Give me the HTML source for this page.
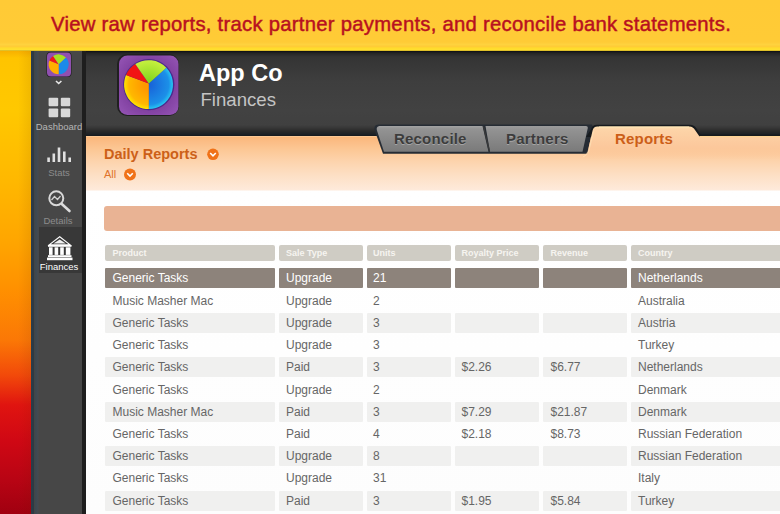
<!DOCTYPE html>
<html><head><meta charset="utf-8">
<style>
*{margin:0;padding:0;box-sizing:border-box}
html,body{width:780px;height:514px;overflow:hidden;background:#fff;font-family:"Liberation Sans",sans-serif}
.a{position:absolute}
#strip{left:0;top:0;width:33px;height:514px;background:linear-gradient(90deg,rgba(0,0,0,0) 55%,rgba(90,30,0,0.10) 100%),linear-gradient(180deg,#f8b000 51px,#ffc400 58px,#ffc800 110px,#ffb800 180px,#ffa600 240px,#ff9000 290px,#fb7806 340px,#f24a0a 375px,#e01410 405px,#d00814 440px,#b80414 480px,#a00010 514px)}
#banner{left:0;top:0;width:780px;height:51px;background:linear-gradient(180deg,#ffca36 0,#ffcb36 42px,#ffd23e 44.5px,#ffcc36 46.5px,#ffda2c 48px,#ffe030 50px,#c0a020 51px);}
#banner span{position:absolute;left:51px;top:13px;font-size:20.3px;letter-spacing:0.26px;color:#b81020;white-space:nowrap;-webkit-text-stroke:0.45px #b81020}
#sidebar{left:32px;top:51px;width:50px;height:463px;background:#474747}
#sideline{left:31px;top:51px;width:8px;height:463px;background:linear-gradient(90deg,#2a3c4a 0,#2e3a44 2.5px,#48443f 3px,#3c4852 4.5px,#444a50 7px,#474747 8px)}
#sideborder{left:82px;top:51px;width:4px;height:463px;background:#1e1e1e}
#header{left:86px;top:51px;width:694px;height:85px;background:linear-gradient(180deg,#0c0e12 0px,#242424 2px,#343434 6px,#3e3e3e 30px,#424242 60px,#404040 74px,#363636 77px,#2a2a2a 80px,#1e2226 83px,#161a1e 85px)}
#content{left:86px;top:136px;width:694px;height:378px;background:linear-gradient(180deg,#fdd0a0 0px,#fbb87c 1.5px,#fbbc84 5px,#fcc896 14px,#fdd4ae 26px,#fde0c6 40px,#feeadb 54px,#ffffff 55px,#fdfdfd 378px)}
.navlbl{position:absolute;font-size:9.5px;color:#8c8c8c;text-align:center;width:50px;left:0;white-space:nowrap}
.hc{background:#cfccc4;border-radius:2px;font-size:9px;font-weight:bold;line-height:16px;color:#f6f4f0;white-space:nowrap;overflow:hidden}
.rd,.rs,.rw{height:20px;line-height:20px;font-size:12px;white-space:nowrap;overflow:hidden;border-radius:1px}
.rd{background:#8d837b;color:#fff}
.rs{background:#f0f0ef;color:#666}
.rw{background:transparent;color:#666}
.tab{position:absolute;font-size:15px;font-weight:bold;white-space:nowrap;letter-spacing:0.2px}
</style></head><body>
<div class="a" id="strip"></div>
<div class="a" id="sidebar">
  <div class="a" style="left:0;top:176px;width:50px;height:46px;background:#383838"></div>
</div>
<div class="a" id="sideline"></div>
<div class="a" id="sideborder"></div>
<svg class="a" style="left:0;top:0" width="90" height="300" viewBox="0 0 90 300">
  <!-- small app icon -->
  <rect x="46.5" y="52" width="25" height="25" rx="4" fill="#1c1c1c"/>
  <rect x="47" y="52.5" width="24" height="24" rx="4" fill="#9050b0"/>
  <g transform="translate(58.7,64.3) scale(0.41)">
    <path d="M0,0 L17.5,-16.8 A24.5,24.5 0 0 1 0,24.5 Z" fill="#1a8ae8"/>
    <path d="M0,0 L0,24.5 A24.5,24.5 0 0 1 -22.8,-9 Z" fill="#ffb000"/>
    <path d="M0,0 L-22.8,-9 A24.5,24.5 0 0 1 -13.7,-20.3 Z" fill="#f01818"/>
    <path d="M0,0 L-13.7,-20.3 A24.5,24.5 0 0 1 17.5,-16.8 Z" fill="#a8e020"/>
  </g>
  <path d="M56,81 L58.7,83.5 L61.4,81" stroke="#e8e8e8" stroke-width="1.6" fill="none"/>
  <!-- dashboard grid -->
  <rect x="48.6" y="97.8" width="9.6" height="8.5" rx="1" fill="#d8d8d8"/>
  <rect x="60.8" y="97.8" width="9.4" height="8.5" rx="1" fill="#d8d8d8"/>
  <rect x="48.6" y="108.6" width="9.6" height="8.7" rx="1" fill="#d8d8d8"/>
  <rect x="60.8" y="108.6" width="9.4" height="8.7" rx="1" fill="#d8d8d8"/>
  <!-- stats bars -->
  <g fill="#e0e0e0">
    <rect x="47.3" y="157.5" width="2.6" height="4.5"/>
    <rect x="52.5" y="153.5" width="2.6" height="8.5"/>
    <rect x="57.7" y="147.5" width="2.6" height="14.5"/>
    <rect x="63" y="151.5" width="2.6" height="10.5"/>
    <rect x="68.4" y="157.5" width="2.6" height="4.5"/>
  </g>
  <!-- details magnifier -->
  <circle cx="56.3" cy="198.3" r="7" stroke="#d8d8d8" stroke-width="2" fill="none"/>
  <path d="M51.5,200 L54.5,196.5 L57.5,199.5 L60.5,196" stroke="#d0d0d0" stroke-width="1.3" fill="none"/>
  <path d="M61.8,204 L69.5,211" stroke="#dcdcdc" stroke-width="2.6" stroke-linecap="round"/>
  <!-- finances bank -->
  <path d="M47.5,245.5 L59.7,236 L71.8,245.5 Z" fill="#ffffff"/>
  <path d="M50.8,244.2 L59.7,237.6 L68.5,244.2 Z" fill="#383838"/>
  <path d="M53.5,243.6 L59.7,239.6 L65.8,243.6 Z" fill="#f0f0f0"/>
  <rect x="48" y="245" width="23.5" height="1.8" fill="#fff"/>
  <g fill="#fff">
    <rect x="49" y="247.3" width="3.6" height="7.6"/>
    <rect x="54.6" y="247.3" width="3.6" height="7.6"/>
    <rect x="60.2" y="247.3" width="3.6" height="7.6"/>
    <rect x="65.8" y="247.3" width="4.6" height="7.6"/>
    <rect x="48" y="255.2" width="23.5" height="2"/>
    <rect x="47" y="257.6" width="25.5" height="2.6"/>
  </g>
</svg>
<div class="navlbl" style="left:34px;top:121px;color:#b4b4b4">Dashboard</div>
<div class="navlbl" style="left:34px;top:167px">Stats</div>
<div class="navlbl" style="left:33px;top:215px">Details</div>
<div class="navlbl" style="left:34px;top:261px;color:#fff">Finances</div>

<div class="a" id="header"></div>
<svg class="a" style="left:100px;top:50px" width="100" height="75" viewBox="100 50 100 75">
  <defs>
    <radialGradient id="pur" cx="0.5" cy="0.5" r="0.7"><stop offset="0.5" stop-color="#7c3c9c"/><stop offset="1" stop-color="#9656b6"/></radialGradient>
    <radialGradient id="blu" cx="0" cy="0" r="25" gradientUnits="userSpaceOnUse"><stop offset="0" stop-color="#1860d8"/><stop offset="0.8" stop-color="#1c90e8"/><stop offset="1" stop-color="#28d0f4"/></radialGradient>
    <radialGradient id="yel" cx="0" cy="0" r="25" gradientUnits="userSpaceOnUse"><stop offset="0.2" stop-color="#ff9800"/><stop offset="0.8" stop-color="#ffb800"/><stop offset="1" stop-color="#ffe800"/></radialGradient>
    <radialGradient id="grn" cx="0" cy="0" r="25" gradientUnits="userSpaceOnUse"><stop offset="0.2" stop-color="#88d820"/><stop offset="1" stop-color="#c8f040"/></radialGradient>
  </defs>
  <rect x="117" y="54" width="62" height="62" rx="10" fill="#202020"/>
  <rect x="119" y="55.6" width="59.5" height="59.5" rx="8.5" fill="url(#pur)"/>
  <g transform="translate(148.8,84.6)">
    <circle r="25.6" fill="#4a2a8c"/>
    <path d="M0,-1 L17.5,-16.8 A24.5,24.5 0 0 1 0,24.5 Z" fill="url(#blu)"/>
    <path d="M0,-1 L0,24.5 A24.5,24.5 0 0 1 -22.8,-9.5 Z" fill="url(#yel)"/>
    <path d="M0,-1 L-22.8,-9.5 A24.5,24.5 0 0 1 -13.5,-20.5 Z" fill="#f21414"/>
    <path d="M0,-1 L-13.5,-20.5 A24.5,24.5 0 0 1 17.5,-16.8 Z" fill="url(#grn)"/>
  </g>
</svg>
<div class="a" style="left:199px;top:59.5px;font-size:23.5px;font-weight:bold;color:#fff;white-space:nowrap">App Co</div>
<div class="a" style="left:200.5px;top:89px;font-size:18.6px;color:#c4c4c4;white-space:nowrap">Finances</div>

<div class="a" id="content"></div>
<svg class="a" style="left:360px;top:120px" width="420" height="45" viewBox="360 120 420 45">
  <defs>
    <linearGradient id="tabg" x1="0" y1="0" x2="0" y2="1"><stop offset="0" stop-color="#9c9c9c"/><stop offset="0.15" stop-color="#929292"/><stop offset="1" stop-color="#7a7a7a"/></linearGradient>
    <linearGradient id="taba" x1="0" y1="126" x2="0" y2="160" gradientUnits="userSpaceOnUse"><stop offset="0" stop-color="#fee0b0"/><stop offset="0.1" stop-color="#fdd4a8"/><stop offset="0.6" stop-color="#fcc89c"/><stop offset="1" stop-color="#fcc89c" stop-opacity="0"/></linearGradient>
  </defs>
  <!-- inactive tabs outline -->
  <path d="M374.5,130 Q373.5,124.5 379,124.5 L592,124.5 L593,127 L587.5,153.8 L383,153.8 Z" fill="#262c34"/>
  <path d="M376.8,130 Q376,126 380.5,126 L482.5,126 L488.5,151.8 L384,151.8 Z" fill="url(#tabg)"/>
  <path d="M379,126.8 L481.5,126.8" stroke="#a4a4a4" stroke-width="1"/>
  <path d="M487,126.8 L584,126.8" stroke="#a4a4a4" stroke-width="1"/>
  <path d="M485.5,126 L586,126 Q588,126 587.8,128 L582.5,151.8 L490,151.8 Z" fill="url(#tabg)"/>
  <path d="M483.5,126.5 L489.5,151.5" stroke="#3a3a3a" stroke-width="1.2"/>
  <!-- reports active -->
  <path d="M591,129.5 Q592,124.8 597,124.8 L690,124.8 Q694,124.8 696.5,128.5 L700.5,134.5 L780,134.5 L780,137 L586,137 Z" fill="#161a1e"/>
  <path d="M580,157 Q586.8,155 588,150 L592.6,130.5 Q593.5,126.5 597.5,126.5 L689.5,126.5 Q693,126.5 695,130 L699.5,136.5 L780,136.5 L780,160 L580,160 Z" fill="url(#taba)"/>
  <path d="M599,127 L689,127" stroke="#ffe8b8" stroke-width="1"/>
  <path d="M593.6,131 L588.8,151 Q587.5,155 583,157" stroke="#ffe4b8" stroke-width="0.9" fill="none" opacity="0.8"/>
  <path d="M699.5,136.6 L780,136.6" stroke="#fed494" stroke-width="1.2"/>
</svg>
<div class="tab" style="left:394px;top:130px;color:#3c3c3c;text-shadow:0 1px 0 rgba(255,255,255,0.3)">Reconcile</div>
<div class="tab" style="left:506px;top:130px;color:#3c3c3c;text-shadow:0 1px 0 rgba(255,255,255,0.3)">Partners</div>
<div class="tab" style="left:615px;top:130px;color:#cc5e18">Reports</div>
<div class="a" style="left:104px;top:146px;font-size:14.5px;font-weight:bold;color:#cc6018;white-space:nowrap">Daily Reports</div>
<svg class="a" style="left:200px;top:145px" width="20" height="40" viewBox="200 145 20 40">
  <circle cx="213" cy="154.3" r="5.8" fill="#f07218"/>
  <path d="M210.2,153 L213,155.8 L215.8,153" stroke="#fff" stroke-width="1.6" fill="none"/>
</svg>
<div class="a" style="left:104px;top:168px;font-size:11px;color:#e0742c;white-space:nowrap">All</div>
<svg class="a" style="left:120px;top:165px" width="20" height="20" viewBox="120 165 20 20">
  <circle cx="130" cy="174.5" r="6" fill="#f07218"/>
  <path d="M127.2,173.2 L130,176 L132.8,173.2" stroke="#fff" stroke-width="1.6" fill="none"/>
</svg>
<div class="a" style="left:104px;top:206px;width:690px;height:25px;border-radius:3px;background:#e9b394"></div>

<div class="a hc" style="left:105px;top:245px;width:170px;height:16px;padding-left:7.5px">Product</div>
<div class="a hc" style="left:279px;top:245px;width:84px;height:16px;padding-left:7px">Sale Type</div>
<div class="a hc" style="left:367px;top:245px;width:84px;height:16px;padding-left:6px">Units</div>
<div class="a hc" style="left:455px;top:245px;width:84px;height:16px;padding-left:6.5px">Royalty Price</div>
<div class="a hc" style="left:543px;top:245px;width:84px;height:16px;padding-left:7.5px">Revenue</div>
<div class="a hc" style="left:631px;top:245px;width:159px;height:16px;padding-left:7px">Country</div>
<div class="a rd" style="left:105px;top:268.30px;width:170px;padding-left:7.5px">Generic Tasks</div>
<div class="a rd" style="left:279px;top:268.30px;width:84px;padding-left:7px">Upgrade</div>
<div class="a rd" style="left:367px;top:268.30px;width:84px;padding-left:6px">21</div>
<div class="a rd" style="left:455px;top:268.30px;width:84px;padding-left:6.5px"></div>
<div class="a rd" style="left:543px;top:268.30px;width:84px;padding-left:7.5px"></div>
<div class="a rd" style="left:631px;top:268.30px;width:159px;padding-left:7px">Netherlands</div>
<div class="a rw" style="left:105px;top:290.54px;width:170px;padding-left:7.5px">Music Masher Mac</div>
<div class="a rw" style="left:279px;top:290.54px;width:84px;padding-left:7px">Upgrade</div>
<div class="a rw" style="left:367px;top:290.54px;width:84px;padding-left:6px">2</div>
<div class="a rw" style="left:455px;top:290.54px;width:84px;padding-left:6.5px"></div>
<div class="a rw" style="left:543px;top:290.54px;width:84px;padding-left:7.5px"></div>
<div class="a rw" style="left:631px;top:290.54px;width:159px;padding-left:7px">Australia</div>
<div class="a rs" style="left:105px;top:312.78px;width:170px;padding-left:7.5px">Generic Tasks</div>
<div class="a rs" style="left:279px;top:312.78px;width:84px;padding-left:7px">Upgrade</div>
<div class="a rs" style="left:367px;top:312.78px;width:84px;padding-left:6px">3</div>
<div class="a rs" style="left:455px;top:312.78px;width:84px;padding-left:6.5px"></div>
<div class="a rs" style="left:543px;top:312.78px;width:84px;padding-left:7.5px"></div>
<div class="a rs" style="left:631px;top:312.78px;width:159px;padding-left:7px">Austria</div>
<div class="a rw" style="left:105px;top:335.02px;width:170px;padding-left:7.5px">Generic Tasks</div>
<div class="a rw" style="left:279px;top:335.02px;width:84px;padding-left:7px">Upgrade</div>
<div class="a rw" style="left:367px;top:335.02px;width:84px;padding-left:6px">3</div>
<div class="a rw" style="left:455px;top:335.02px;width:84px;padding-left:6.5px"></div>
<div class="a rw" style="left:543px;top:335.02px;width:84px;padding-left:7.5px"></div>
<div class="a rw" style="left:631px;top:335.02px;width:159px;padding-left:7px">Turkey</div>
<div class="a rs" style="left:105px;top:357.26px;width:170px;padding-left:7.5px">Generic Tasks</div>
<div class="a rs" style="left:279px;top:357.26px;width:84px;padding-left:7px">Paid</div>
<div class="a rs" style="left:367px;top:357.26px;width:84px;padding-left:6px">3</div>
<div class="a rs" style="left:455px;top:357.26px;width:84px;padding-left:6.5px">$2.26</div>
<div class="a rs" style="left:543px;top:357.26px;width:84px;padding-left:7.5px">$6.77</div>
<div class="a rs" style="left:631px;top:357.26px;width:159px;padding-left:7px">Netherlands</div>
<div class="a rw" style="left:105px;top:379.50px;width:170px;padding-left:7.5px">Generic Tasks</div>
<div class="a rw" style="left:279px;top:379.50px;width:84px;padding-left:7px">Upgrade</div>
<div class="a rw" style="left:367px;top:379.50px;width:84px;padding-left:6px">2</div>
<div class="a rw" style="left:455px;top:379.50px;width:84px;padding-left:6.5px"></div>
<div class="a rw" style="left:543px;top:379.50px;width:84px;padding-left:7.5px"></div>
<div class="a rw" style="left:631px;top:379.50px;width:159px;padding-left:7px">Denmark</div>
<div class="a rs" style="left:105px;top:401.74px;width:170px;padding-left:7.5px">Music Masher Mac</div>
<div class="a rs" style="left:279px;top:401.74px;width:84px;padding-left:7px">Paid</div>
<div class="a rs" style="left:367px;top:401.74px;width:84px;padding-left:6px">3</div>
<div class="a rs" style="left:455px;top:401.74px;width:84px;padding-left:6.5px">$7.29</div>
<div class="a rs" style="left:543px;top:401.74px;width:84px;padding-left:7.5px">$21.87</div>
<div class="a rs" style="left:631px;top:401.74px;width:159px;padding-left:7px">Denmark</div>
<div class="a rw" style="left:105px;top:423.98px;width:170px;padding-left:7.5px">Generic Tasks</div>
<div class="a rw" style="left:279px;top:423.98px;width:84px;padding-left:7px">Paid</div>
<div class="a rw" style="left:367px;top:423.98px;width:84px;padding-left:6px">4</div>
<div class="a rw" style="left:455px;top:423.98px;width:84px;padding-left:6.5px">$2.18</div>
<div class="a rw" style="left:543px;top:423.98px;width:84px;padding-left:7.5px">$8.73</div>
<div class="a rw" style="left:631px;top:423.98px;width:159px;padding-left:7px">Russian Federation</div>
<div class="a rs" style="left:105px;top:446.22px;width:170px;padding-left:7.5px">Generic Tasks</div>
<div class="a rs" style="left:279px;top:446.22px;width:84px;padding-left:7px">Upgrade</div>
<div class="a rs" style="left:367px;top:446.22px;width:84px;padding-left:6px">8</div>
<div class="a rs" style="left:455px;top:446.22px;width:84px;padding-left:6.5px"></div>
<div class="a rs" style="left:543px;top:446.22px;width:84px;padding-left:7.5px"></div>
<div class="a rs" style="left:631px;top:446.22px;width:159px;padding-left:7px">Russian Federation</div>
<div class="a rw" style="left:105px;top:468.46px;width:170px;padding-left:7.5px">Generic Tasks</div>
<div class="a rw" style="left:279px;top:468.46px;width:84px;padding-left:7px">Upgrade</div>
<div class="a rw" style="left:367px;top:468.46px;width:84px;padding-left:6px">31</div>
<div class="a rw" style="left:455px;top:468.46px;width:84px;padding-left:6.5px"></div>
<div class="a rw" style="left:543px;top:468.46px;width:84px;padding-left:7.5px"></div>
<div class="a rw" style="left:631px;top:468.46px;width:159px;padding-left:7px">Italy</div>
<div class="a rs" style="left:105px;top:490.70px;width:170px;padding-left:7.5px">Generic Tasks</div>
<div class="a rs" style="left:279px;top:490.70px;width:84px;padding-left:7px">Paid</div>
<div class="a rs" style="left:367px;top:490.70px;width:84px;padding-left:6px">3</div>
<div class="a rs" style="left:455px;top:490.70px;width:84px;padding-left:6.5px">$1.95</div>
<div class="a rs" style="left:543px;top:490.70px;width:84px;padding-left:7.5px">$5.84</div>
<div class="a rs" style="left:631px;top:490.70px;width:159px;padding-left:7px">Turkey</div>
<div class="a" id="banner"><span>View raw reports, track partner payments, and reconcile bank statements.</span></div>
</body></html>
